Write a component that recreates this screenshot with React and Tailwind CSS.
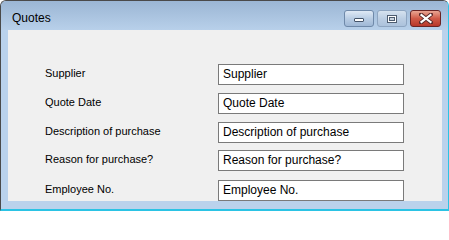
import React from 'react';

const fields = [
  { label: 'Supplier', gap: 'mt-[34px]' },
  { label: 'Quote Date', gap: 'mt-[8px]' },
  { label: 'Description of purchase', gap: 'mt-[8px]' },
  { label: 'Reason for purchase?', gap: 'mt-[7px]' },
  { label: 'Employee No.', gap: 'mt-[9px]' },
];

function CaptionButtons() {
  return (
    <div className="flex gap-[3px] mt-[9px] mr-[7px] h-[17px]">
      <div className="w-[30px] h-full rounded-[3px] border border-[#6f89a9] bg-gradient-to-b from-[#dfe9f5] via-[#b9cde4] to-[#9fb8d6] flex items-center justify-center">
        <div className="w-[10px] h-[4px] bg-white border border-[#44546a] rounded-[1px] mt-[3px]" />
      </div>
      <div className="w-[30px] h-full rounded-[3px] border border-[#8ea5c1] bg-gradient-to-b from-[#d6e2ef] via-[#bccee3] to-[#acc2dc] flex items-center justify-center">
        <div className="w-[10px] h-[8px] border border-[#4d5c70] bg-white flex items-center justify-center">
          <div className="w-[6px] h-[4px] border border-[#4d5c70] bg-[#c8d3df]" />
        </div>
      </div>
      <div className="w-[31px] h-full rounded-[3px] border border-[#6a2424] bg-gradient-to-b from-[#e8a593] via-[#cf5a48] to-[#b8372a] flex items-center justify-center">
        <svg width="14" height="11" viewBox="0 0 14 11">
          <path d="M2 1.5 L12 9.5 M12 1.5 L2 9.5" stroke="#5a2a2a" strokeWidth="4" strokeLinecap="square" />
          <path d="M2.5 2 L11.5 9 M11.5 2 L2.5 9" stroke="#ffffff" strokeWidth="2.2" strokeLinecap="square" />
        </svg>
      </div>
    </div>
  );
}

export default function App() {
  return (
    <div className="w-[449px] h-[211px] bg-white">
      <div className="w-[449px] h-[211px] flex flex-col rounded-t-[6px] border-t border-l border-[#4a4a4a] border-r border-r-[#2bc3e4] border-b-2 border-b-[#2bc3e4] bg-[#bad2ec] overflow-hidden font-['Liberation_Sans',Arial,sans-serif]">
        <div className="h-[29px] flex bg-gradient-to-b from-[#9bb6d4] to-[#b8d0ea]">
          <div className="pl-[11px] pt-[10px] text-[12px] leading-[14px] text-black">Quotes</div>
          <div className="ml-auto">
            <CaptionButtons />
          </div>
        </div>
        <div className="ml-[7px] w-[434px] h-[171px] bg-[#f0f0f0] flex flex-col">
          {fields.map((f) => (
            <div key={f.label} className={`${f.gap} flex items-center h-[21px]`}>
              <div className="pl-[37px] w-[210px] text-[11px] leading-[13px] text-black -mt-[2px]">{f.label}</div>
              <div className="w-[186px] h-[21px] border border-[#7a7a7a] bg-white pl-[4px] text-[12px] leading-[19px] text-black">
                {f.label}
              </div>
            </div>
          ))}
        </div>
      </div>
    </div>
  );
}
